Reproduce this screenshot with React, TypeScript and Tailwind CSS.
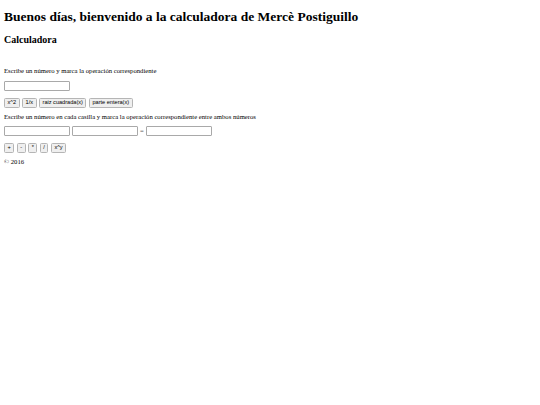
import { useState } from 'react'

const serif = "[font-family:'Liberation_Serif','Times_New_Roman',serif]"
const sans = "[font-family:'Liberation_Sans',Arial,sans-serif]"

function Btn({ label }: { label: string }) {
	return (
		<button className={`${sans} h-[10px] px-[2.5px] border border-[#b5b5b5] rounded-[1.5px] bg-[#efefef] text-[5.6px] leading-none text-black`}>
			{label}
		</button>
	)
}

function Field({ value, onChange }: { value: string; onChange: (v: string) => void }) {
	return (
		<input
			value={value}
			onChange={e => onChange(e.target.value)}
			className="w-[66px] h-[10px] border border-[#a9a9a9] rounded-[1px] bg-white text-[6px] px-[1px] outline-none"
		/>
	)
}

export default function App() {
	const [a, setA] = useState('')
	const [x, setX] = useState('')
	const [y, setY] = useState('')
	const [r, setR] = useState('')

	return (
		<div className={`${serif} min-h-[405px] bg-white text-black px-[4px] pt-[8px]`}>
			<h1 className="text-[13.5px] leading-[18px] font-bold">
				Buenos días, bienvenido a la calculadora de Mercè Postiguillo
			</h1>
			<h2 className="mt-[7px] text-[10px] leading-[14px] font-bold">Calculadora</h2>

			<p className="mt-[19px] text-[6.7px] leading-[9px]">
				Escribe un número y marca la operación correspondiente
			</p>
			<div className="mt-[6px] flex">
				<Field value={a} onChange={setA} />
			</div>
			<div className="mt-[7px] flex gap-[2.5px]">
				<Btn label="x^2" />
				<Btn label="1/x" />
				<Btn label="raiz cuadrada(x)" />
				<Btn label="parte entera(x)" />
			</div>

			<p className="mt-[4px] text-[6.7px] leading-[9px]">
				Escribe un número en cada casilla y marca la operación correspondiente entre ambos números
			</p>
			<div className="mt-[5px] flex items-center gap-[2px] text-[6.7px]">
				<Field value={x} onChange={setX} />
				<Field value={y} onChange={setY} />
				<span className="text-[#555]">=</span>
				<Field value={r} onChange={setR} />
			</div>
			<div className="mt-[7px] flex gap-[2.5px]">
				<Btn label="+" />
				<Btn label="-" />
				<Btn label="*" />
				<Btn label="/" />
				<Btn label="x^y" />
			</div>

			<p className="mt-[4px] text-[6.7px] leading-[9px]">© 2016</p>
		</div>
	)
}
